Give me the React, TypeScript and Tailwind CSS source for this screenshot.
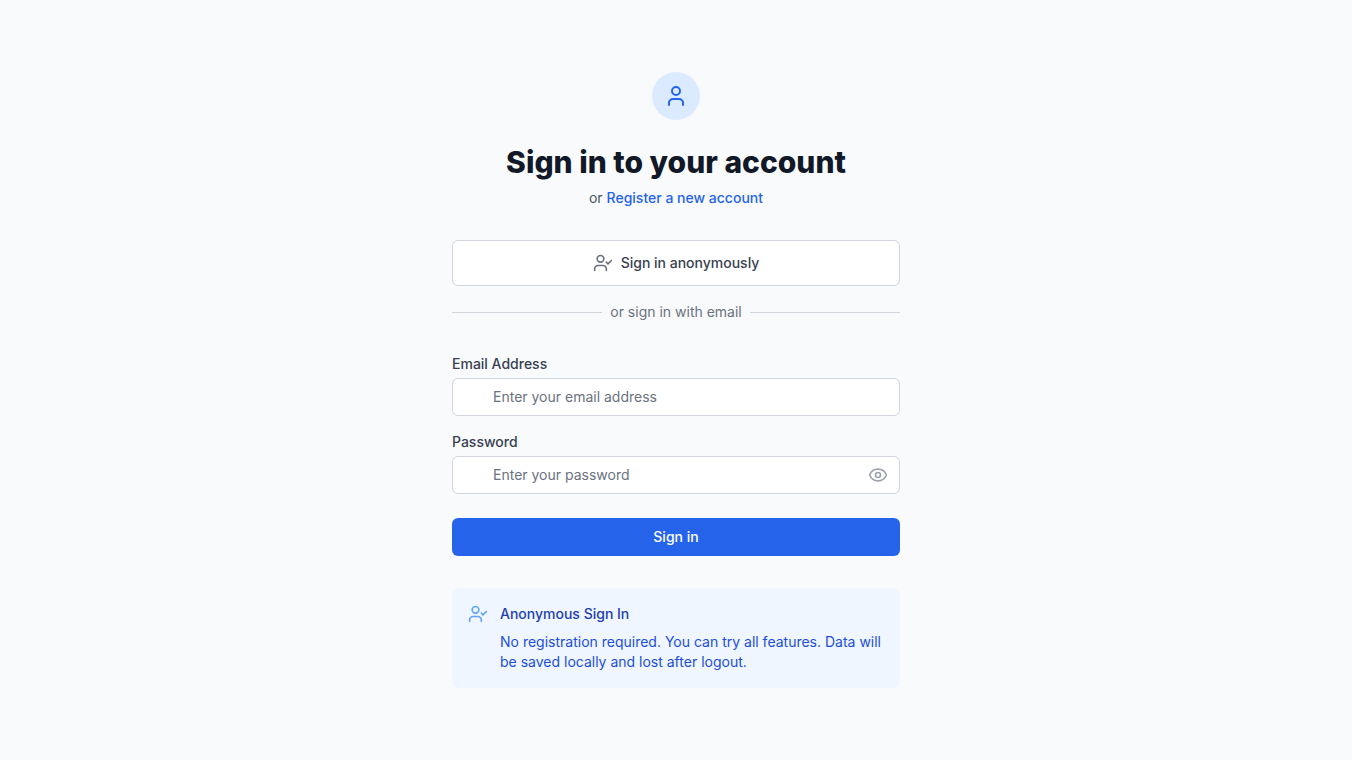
import { useState } from "react";
import { Eye, EyeOff, User, UserCheck } from "lucide-react";

interface FieldProps {
    id: string;
    label: string;
    type: string;
    placeholder: string;
    value: string;
    autoComplete: string;
    onChange: (value: string) => void;
    children?: React.ReactNode;
}

function Field({ id, label, type, placeholder, value, autoComplete, onChange, children }: FieldProps) {
    return (
        <div>
            <label htmlFor={id} className="block text-sm font-medium text-[#374151]">
                {label}
            </label>
            <div className="relative mt-1">
                <input
                    id={id}
                    name={id}
                    type={type}
                    autoComplete={autoComplete}
                    required
                    value={value}
                    onChange={(e) => onChange(e.target.value)}
                    placeholder={placeholder}
                    className="block w-full rounded-md border border-[#d1d5db] bg-white px-10 py-2 text-sm text-[#111827] placeholder:text-[#6b7280] focus:border-[#3b82f6] focus:outline-none"
                />
                {children}
            </div>
        </div>
    );
}

export default function App() {
    const [email, setEmail] = useState("");
    const [password, setPassword] = useState("");
    const [showPassword, setShowPassword] = useState(false);

    return (
        <div className="flex min-h-screen items-center justify-center bg-[#f9fafb] px-8 py-12 font-['Inter',sans-serif]">
            <main className="w-full max-w-md space-y-8">
                {/* Header */}
                <div className="text-center">
                    <div className="mx-auto flex size-12 items-center justify-center rounded-full bg-[#dbeafe]">
                        <User className="size-6 text-[#2563eb]" />
                    </div>
                    <h1 className="mt-6 text-3xl font-extrabold text-[#111827]">Sign in to your account</h1>
                    <p className="mt-2 text-sm text-[#4b5563]">
                        or{" "}
                        <a href="#register" className="font-medium text-[#2563eb] hover:text-[#3b82f6]">
                            Register a new account
                        </a>
                    </p>
                </div>

                {/* Anonymous sign in */}
                <div>
                    <button
                        type="button"
                        className="flex w-full items-center justify-center rounded-md border border-[#d1d5db] bg-white px-4 py-3 text-sm font-medium text-[#374151] hover:bg-[#f9fafb]"
                    >
                        <UserCheck className="mr-2 size-5 text-[#6b7280]" />
                        Sign in anonymously
                    </button>
                    <div className="mt-4 flex items-center gap-2">
                        <div className="flex-1 border-t border-[#d1d5db]" />
                        <span className="text-sm text-[#6b7280]">or sign in with email</span>
                        <div className="flex-1 border-t border-[#d1d5db]" />
                    </div>
                </div>

                {/* Email form */}
                <form className="space-y-6" onSubmit={(e) => e.preventDefault()}>
                    <div className="space-y-4">
                        <Field
                            id="email"
                            label="Email Address"
                            type="email"
                            autoComplete="email"
                            placeholder="Enter your email address"
                            value={email}
                            onChange={setEmail}
                        />
                        <Field
                            id="password"
                            label="Password"
                            type={showPassword ? "text" : "password"}
                            autoComplete="current-password"
                            placeholder="Enter your password"
                            value={password}
                            onChange={setPassword}
                        >
                            <button
                                type="button"
                                aria-label={showPassword ? "Hide password" : "Show password"}
                                onClick={() => setShowPassword(!showPassword)}
                                className="absolute inset-y-0 right-0 flex items-center pr-3 text-[#9ca3af] hover:text-[#4b5563]"
                            >
                                {showPassword ? <EyeOff className="size-5" /> : <Eye className="size-5" />}
                            </button>
                        </Field>
                    </div>

                    <button
                        type="submit"
                        className="flex w-full justify-center rounded-md border border-transparent bg-[#2563eb] px-4 py-2 text-sm font-medium text-white hover:bg-[#1d4ed8]"
                    >
                        Sign in
                    </button>
                </form>

                {/* Info box */}
                <div className="flex rounded-md bg-[#eff6ff] p-4">
                    <UserCheck className="size-5 shrink-0 text-[#60a5fa]" />
                    <div className="ml-3 text-sm">
                        <h2 className="font-medium text-[#1e40af]">Anonymous Sign In</h2>
                        <p className="mt-2 text-[#1d4ed8]">
                            No registration required. You can try all features. Data will be saved locally and lost after logout.
                        </p>
                    </div>
                </div>
            </main>
        </div>
    );
}
